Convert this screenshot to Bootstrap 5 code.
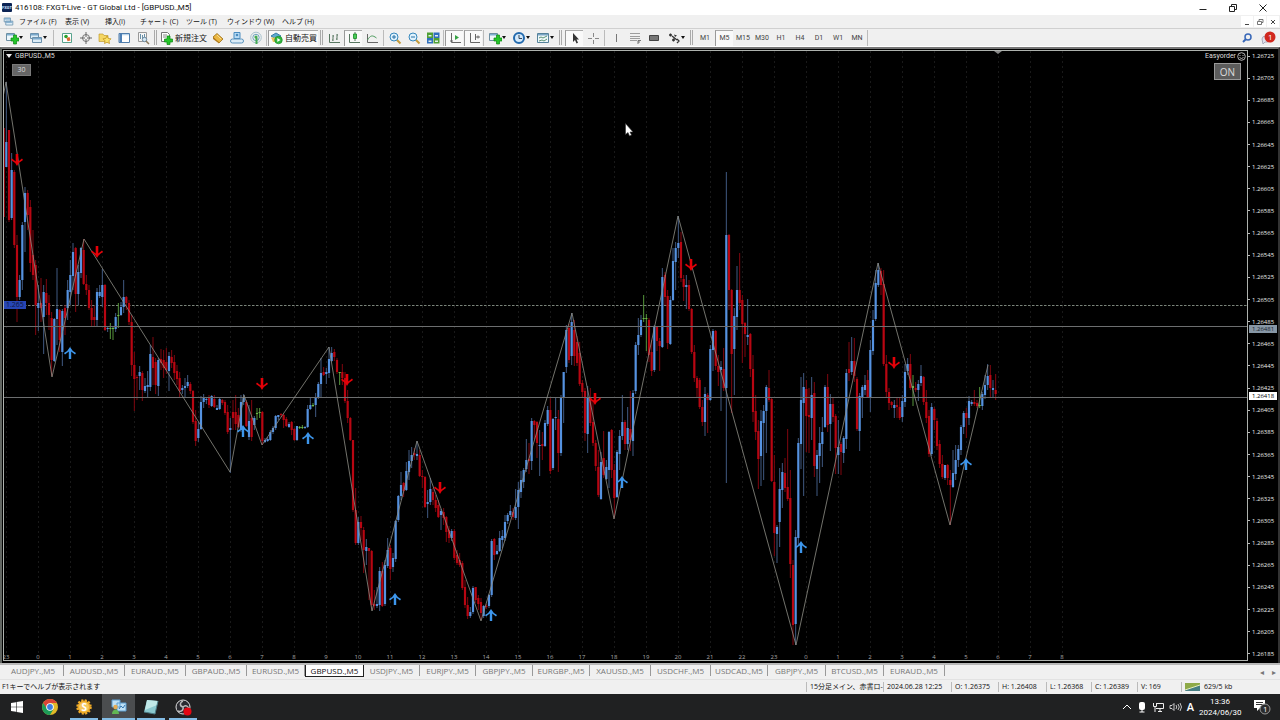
<!DOCTYPE html>
<html lang="ja">
<head>
<meta charset="utf-8">
<meta name="viewport" content="width=device-width, initial-scale=1">
<title>416108: FXGT-Live - GT Global Ltd - [GBPUSD.,M5]</title>
<link rel="stylesheet" href="https://cdn.jsdelivr.net/npm/bootstrap@5.3.0/dist/css/bootstrap.min.css">
<style>
body{font-family:"Open Sans","Noto Sans CJK JP",sans-serif;font-size:7px;line-height:10px;background:#f0f0f0;color:#111;overflow:hidden}
button{font:inherit;color:inherit;background:none;border:0;padding:0}
svg{display:block;flex:none}
.titlebar{height:15px;background:#fff;padding-left:2px;font-family:Roboto,"Noto Sans CJK JP",sans-serif;font-size:8px}
.logo-box{width:10px;height:9px;background:#0b2354;color:#cfe4ff;font-size:4px;line-height:9px;border-radius:1px;text-align:center;font-weight:700;margin-right:3px}
.win-ctl{gap:20px;padding-right:12px}
.menubar{height:14px;padding-left:3px;border-bottom:1px solid #d0d0d0}
.menu-grid{display:grid;grid-template-columns:16px 46px 40px 35px 46px 41px 55px auto;align-items:center}
.mdi{gap:1px;padding-right:1px}
.mdi button{width:12px;height:11px;background:#fff;display:grid;place-items:center}
.toolbar{height:18px;padding-left:2px;border-bottom:1px solid #fff}
.tg{display:flex;align-items:center;gap:1px;height:17px}
.tb{width:18px;height:16px;display:flex;align-items:center;justify-content:center;flex:none}
.tb.pressed{background:#f9f9f9;border-left:1px solid #999;border-top:1px solid #aaa}
.tb.drop{width:23px;justify-content:space-between;padding:0 2px 0 3px}
.tb.drop::after,.caret{content:"";border:2px solid transparent;border-top:3px solid #111;border-bottom:0}
.over .caret{border-width:4px 3px 0;border-top-color:#eee}
.tf .tb{font-family:Roboto,sans-serif;color:#444}
.vs{width:1px;height:16px;background:#bbb;flex:none;margin:0 2px}
.vs.tight{margin:0 1px}
.vs.wide{margin:0 4px}
.grip{width:3px;height:15px;border:1px solid #aaa;border-width:0 1px;flex:none;margin:0 2px}
.grip.wide{margin:0 3px}
.order{width:50px;gap:2px;justify-content:flex-start;white-space:nowrap;font-size:8px}
.frame{background:#000;border-top:2px solid #777;border-left:2px solid #626662;border-right:2px solid #333;padding:1px 0 2px 1px;min-height:0}
.plot{border:1px solid #aeb2ae}
.plot>svg{width:100%;height:100%;position:absolute;inset:0}
.over{position:absolute;color:#ddd;z-index:2}
.symbol-name{left:2px;top:0;gap:3px;font-family:Roboto,sans-serif}
.minutes{left:8px;top:13px;width:19px;height:12px;background:#666;border:1px solid #7a7a7a;line-height:10px}
.expert{right:1px;top:0;gap:1px;font-family:Roboto,sans-serif}
.toggle{right:6px;top:12px;width:27px;height:17px;background:#5c5c5c;border:1px solid #999;font-size:10px}
.level{left:0;top:41%;width:22px;height:8px;background:#2746b5;color:#10183f;line-height:8px;padding-left:2px}
.hours{left:-14px;right:0;bottom:-1px;display:flex;font-size:6px;line-height:8px;color:#aaa}
.hours span{flex:none;text-align:center}
.axis{width:30px;color:#eee;font-size:6px;line-height:8px;padding:2px 0 3px}
.axis div div{display:flex;align-items:center;gap:2px}
.axis div div::before{content:"";width:2px;height:1px;background:#bbb}
.tag{position:absolute;left:1px;right:1px;padding-left:3px;height:8px}
.tag.line{top:45%;background:#8797a6;color:#17202a}
.tag.bid{top:56%;background:#fff;color:#000}
.sheet-tabs{height:16px;border-top:2px solid #b8b8b8;color:#777;font-size:8px;padding-left:3px}
.tabs-grid{display:grid;grid-template-columns:61px 61px 61px 61px 58px 59px 56px 56px 57px 57px 61px 60px 57px 58px 58px 61px}
.tabs-grid button{height:11px;line-height:10px;border-right:1px solid #999;white-space:nowrap}
.tabs-grid .active{background:#fff;color:#111;border:1px solid #222;border-top:0;height:12px}
.statusbar{height:15px;padding-left:2px;white-space:nowrap;border-top:1px solid #e2e2e2}
.st-grid{display:grid;grid-template-columns:77px 68px 47px 48px 45px 46px 44px 99px}
.st-grid>div{border-left:1px solid #bbb;padding-left:3px}
.taskbar{height:26px;background:#202122;color:#fff;font-size:8px}
.task{width:33px;height:26px;display:grid;place-items:center}
.task.run{box-shadow:inset 0 -2px #83bce5;width:28px;margin-right:4px}
.task.cur{background:#4b4d4f;width:33px;margin-right:2px}
.tray{gap:5px;padding-right:8px}
.ime{font-size:11px;font-weight:600}
.clk{line-height:11px;width:42px;margin-right:6px;font-family:Roboto,sans-serif}
</style>
</head>
<body class="d-flex flex-column vh-100">
<svg width="0" height="0" class="position-absolute">
<defs>
<symbol id="newchart" viewBox="0 0 14 14"><path d="M1.500 2.500h8v7h-8z" fill="#edf6fb" stroke="#6d8fa3"/><path d="M2 3h7v1.500H2z" fill="#7eb0d0"/><path d="M8.500 4h3v3h2.500v3h-2.500v3h-3v-3H6V7h2.500z" fill="#24c52a" stroke="#0c8712" stroke-width=".7"/></symbol>
<symbol id="profiles" viewBox="0 0 14 14"><path d="M1.500 2.500h8v5h-8zM3.500 6.500h9v5h-9z" fill="#dcecf6" stroke="#6b91ad"/><path d="M2 3h7v1.500H2zM4 7h8v1.500H4z" fill="#79a8cc"/></symbol>
<symbol id="market" viewBox="0 0 14 14"><path d="M2.500 2.500h9v9h-9z" fill="#fff" stroke="#57a38d"/><circle cx="6" cy="5.500" r="1.800" fill="#2aa32a"/><path d="M6.500 7l3-1 1 3.500-3 .8z" fill="#e06a30"/></symbol>
<symbol id="target" viewBox="0 0 14 14"><circle cx="7" cy="7" r="3.500" fill="#eee" stroke="#777"/><path d="M7 1v5M7 8v5M1 7h5M8 7h5" stroke="#666"/></symbol>
<symbol id="stars" viewBox="0 0 14 14"><path d="M1 3h4l1 1.500h4v6H1z" fill="#f5d765" stroke="#b99020" stroke-width=".6"/><path d="M9 5l1.300 2.500 2.700.3-2 2 .5 2.700L9 11.300l-2.500 1.200.5-2.700-2-2 2.700-.3z" fill="#fbe36b" stroke="#bd8d12" stroke-width=".7"/></symbol>
<symbol id="panel" viewBox="0 0 14 14"><path d="M2 2.500h10.500v9H2z" fill="#fff" stroke="#4f7dac"/><path d="M2.500 3h2.500v8H2.500z" fill="#4c7eb4"/><path d="M5 3.200h7v1H5z" fill="#a6c9e6"/></symbol>
<symbol id="tester" viewBox="0 0 14 14"><path d="M2.500 1.500h8v9h-8z" fill="#f6f6f6" stroke="#999"/><path d="M4.500 3v5M6.500 4v4M8.500 3v4" stroke="#6890a8"/><circle cx="8.500" cy="8.500" r="2.200" fill="#d5e8f4" stroke="#6a88a0"/><path d="M10 10l3 3" stroke="#8a7a60" stroke-width="1.500"/></symbol>
<symbol id="neworder" viewBox="0 0 14 14"><path d="M2.500 1.500h6l2 2v7h-8z" fill="#fff" stroke="#777"/><path d="M4 4h4M4 6h3" stroke="#888"/><path d="M8 5h3v3h2.500v3H11v2.500H8V11H5.500V8H8z" fill="#24c52a" stroke="#0c8712" stroke-width=".7"/></symbol>
<symbol id="gold" viewBox="0 0 14 14"><path d="M2 6l4-3.500L12 8l-4 4z" fill="#eab641" stroke="#986b13" stroke-width=".8"/><path d="M2 6v2l6 4.500V11z" fill="#b37c1e"/><path d="M6 4l4 4" stroke="#f7dd8d"/></symbol>
<symbol id="vps" viewBox="0 0 14 14"><path d="M4 1.500h6v6H4z" fill="#b9dcf5" stroke="#4a8cc0"/><path d="M2.500 12a2 2 0 010-4h9a2 2 0 010 4z" fill="#dcecf7" stroke="#5a92bd"/><circle cx="7" cy="4" r="1.300" fill="#4a8cc0"/></symbol>
<symbol id="signal" viewBox="0 0 14 14"><g fill="none"><circle cx="7" cy="6.500" r="5.300" stroke="#a9c3ce"/><circle cx="7" cy="6.500" r="3.200" stroke="#6fa6be"/></g><circle cx="7" cy="6" r="1.600" fill="#45aa53"/><path d="M7.500 7v6" stroke="#45aa53" stroke-width="2"/></symbol>
<symbol id="auto" viewBox="0 0 14 14"><path d="M2 5l5-3 5 3-5 3z" fill="#5eaad0" stroke="#397ea5"/><path d="M2 6.500h8v4.500H4z" fill="#e7c45b"/><circle cx="9.500" cy="9" r="3.800" fill="#30b63d" stroke="#178421" stroke-width=".6"/><path d="M8.300 7v4l3.200-2z" fill="#fff"/></symbol>
<symbol id="bars" viewBox="0 0 14 14"><path d="M2.500 3v8.500H13M6 4v6M10 3v6M5 9h1M6 5h1M10 4h1M9 8h1" fill="none" stroke="#587761"/></symbol>
<symbol id="candles" viewBox="0 0 14 14"><path d="M2.500 3v8.500H13M8 1v9" fill="none" stroke="#587761"/><path d="M6.500 3h3v4.500h-3z" fill="#49c957" stroke="#168b25" stroke-width=".8"/></symbol>
<symbol id="linech" viewBox="0 0 14 14"><path d="M2.500 3v8.500H13" fill="none" stroke="#666"/><path d="M2.500 9c3-5 5-5 9-2" fill="none" stroke="#4c9b5c"/></symbol>
<symbol id="zin" viewBox="0 0 14 14"><path d="M8.500 8.500l4 4" stroke="#c49b3b" stroke-width="2"/><circle cx="6" cy="6" r="4" fill="#dff1fc" stroke="#3688bd"/><path d="M4 6h4M6 4v4" stroke="#2671a6"/></symbol>
<symbol id="zout" viewBox="0 0 14 14"><path d="M8.500 8.500l4 4" stroke="#c49b3b" stroke-width="2"/><circle cx="6" cy="6" r="4" fill="#dff1fc" stroke="#3688bd"/><path d="M4 6h4" stroke="#2671a6"/></symbol>
<symbol id="tile" viewBox="0 0 14 14"><path d="M1 1.500h6v5.500H1zM7.500 7h6v5.500h-6z" fill="#4fa035"/><path d="M7.500 1.500h6v5.500h-6zM1 7h6v5.500H1z" fill="#2f6fbd"/><path d="M2.500 4h3v1.500h-3zM9 4h3v1.500H9zM2.500 9.500h3v1.500h-3zM9 9.500h3v1.500H9z" fill="#e4f0ee"/></symbol>
<symbol id="scroll" viewBox="0 0 14 14"><path d="M3.500 2v9.500H13M2 10h3" fill="none" stroke="#666"/><path d="M7 4v5l4-2.500z" fill="#36a344"/></symbol>
<symbol id="shift" viewBox="0 0 14 14"><path d="M3.500 2v9.500H13M8.500 3v6" fill="none" stroke="#666"/><path d="M9 6h4M11 4.500v3" stroke="#666"/></symbol>
<symbol id="clock" viewBox="0 0 14 14"><circle cx="7" cy="7" r="5" fill="#d4e9fb" stroke="#2269ad" stroke-width="2"/><path d="M7 4v3.500h3" fill="none" stroke="#345"/></symbol>
<symbol id="tpl" viewBox="0 0 14 14"><path d="M1.500 2.500h11v9h-11z" fill="#eff8fa" stroke="#55829b"/><path d="M2 3h10v1.500H2z" fill="#7ba6c5"/><path d="M3 7l2-1 2 1 4-2M3 10l3-1 2 1 3-2" fill="none" stroke="#5a9275"/></symbol>
<symbol id="arrow" viewBox="0 0 14 14"><path d="M5 2v9l2-2 1.500 3.500 1.500-.7L8.500 8.500H11z" fill="#333"/></symbol>
<symbol id="cross" viewBox="0 0 14 14"><path d="M7.500 2v4M7.500 9v4M2 7.500h4M9 7.500h4" stroke="#888"/></symbol>
<symbol id="vline" viewBox="0 0 14 14"><path d="M7.500 3v8" stroke="#777"/></symbol>
<symbol id="fibo" viewBox="0 0 14 14"><path d="M2 2.500h10M2 5.500h10M2 7.500h10M2 9.500h7" stroke="#888" stroke-width=".8"/><path d="M10 13V9.500h3M10 11h2" fill="none" stroke="#555" stroke-width=".8"/></symbol>
<symbol id="rectg" viewBox="0 0 14 14"><path d="M2.500 4.500h9v5h-9z" fill="#777" stroke="#444"/></symbol>
<symbol id="objs" viewBox="0 0 14 14"><path d="M2 4h3M3.500 2.500v3M5 5l5 4M5 9h3M6.500 7.500v3M10 8l2 2-2 2" fill="none" stroke="#333" stroke-width="1.300"/><path d="M7 3.500l3 1-2 1.500z" fill="#333"/></symbol>
<symbol id="dn" viewBox="-7 -7 14 14"><path d="M-1.300-6h2.600V1.500L5-1.500 6 0Q2 2 0 6-2 2-6 0l1-1.500 3.700 3z" fill="#e60008"/></symbol>
<symbol id="up" viewBox="-7 -7 14 14"><path d="M-1.200 6h2.400V-1.500L5 1.500 6 0Q2-2 0-6-2-2-6 0l1 1.500 3.800-3z" fill="#3d96ec"/></symbol>
</defs>
</svg>

<header class="titlebar d-flex align-items-center">
  <span class="logo-box">FXGT</span><span>416108: FXGT-Live - GT Global Ltd - [GBPUSD.,M5]</span>
  <div class="win-ctl d-flex ms-auto">
    <button aria-label="最小化"><svg width="10" height="10"><path d="M1.500 6.500h7" stroke="#222"/></svg></button>
    <button aria-label="元に戻す"><svg width="10" height="10" fill="none" stroke="#222"><path d="M1.500 3.500h5v5h-5zM3.500 3V1.500h5v5H7"/></svg></button>
    <button aria-label="閉じる"><svg width="10" height="10" stroke="#222"><path d="M1.500 1.500l7 7M8.500 1.500l-7 7"/></svg></button>
  </div>
</header>

<nav class="menubar d-flex align-items-center">
  <div class="menu-grid">
    <svg width="11" height="11" viewBox="0 0 14 14"><use href="#profiles"/></svg>
    <button class="text-start">ファイル (F)</button><button class="text-start">表示 (V)</button><button class="text-start">挿入(I)</button><button class="text-start">チャート (C)</button><button class="text-start">ツール (T)</button><button class="text-start">ウィンドウ (W)</button><button class="text-start">ヘルプ (H)</button>
  </div>
  <div class="mdi d-flex ms-auto">
    <button aria-label="チャート最小化"><svg width="8" height="8"><path d="M2 6.500h4" stroke="#444"/></svg></button>
    <button aria-label="チャートを元に戻す"><svg width="8" height="8" fill="none" stroke="#555" stroke-width=".8"><path d="M1.500 3.500h4v3h-4zM3 3V1.500h4v3H6"/></svg></button>
    <button aria-label="チャートを閉じる"><svg width="8" height="8" stroke="#444"><path d="M2 2l4 4M6 2L2 6"/></svg></button>
  </div>
</nav>

<div class="toolbar d-flex align-items-center">
  <div class="tg" data-icons="newchart+ profiles+"></div><i class="vs wide"></i>
  <div class="tg" data-icons="market target stars panel tester"></div><i class="grip"></i>
  <div class="tg"><button class="tb order"><svg width="14" height="14"><use href="#neworder"/></svg>新規注文</button></div>
  <div class="tg" data-icons="gold vps signal"></div><i class="vs tight"></i>
  <div class="tg"><button class="tb order pressed"><svg width="14" height="14"><use href="#auto"/></svg>自動売買</button></div><i class="grip"></i>
  <div class="tg" data-icons="bars candles! linech"></div><i class="vs"></i>
  <div class="tg" data-icons="zin zout tile"></div><i class="vs tight"></i>
  <div class="tg" data-icons="scroll! shift!"></div><i class="vs tight"></i>
  <div class="tg" data-icons="newchart+ clock+ tpl+"></div><i class="grip wide"></i>
  <div class="tg" data-icons="arrow! cross"></div><i class="vs"></i>
  <div class="tg" data-icons="vline fibo rectg objs+"></div><i class="grip wide"></i>
  <div class="tg tf"><button class="tb">M1</button><button class="tb pressed">M5</button><button class="tb">M15</button><button class="tb">M30</button><button class="tb">H1</button><button class="tb">H4</button><button class="tb">D1</button><button class="tb">W1</button><button class="tb">MN</button></div><i class="vs tight"></i>
  <div class="d-flex ms-auto gap-2 pe-1">
    <button aria-label="検索"><svg width="12" height="12" fill="none"><circle cx="7" cy="5" r="3" stroke="#3968b8" stroke-width="1.500"/><path d="M5 7L2 10" stroke="#3968b8" stroke-width="2"/></svg></button>
    <button aria-label="通知"><svg width="15" height="14"><path d="M1 8a4 3 0 118 0 4 3 0 01-5 3l-2 2z" fill="#dfe2ee" stroke="#aab"/><circle cx="9" cy="6" r="5.500" fill="#d0281e"/><text x="7" y="9" fill="#fff" font-size="8">1</text></svg></button>
  </div>
</div>

<main class="frame d-flex flex-grow-1">
  <section class="plot position-relative flex-grow-1 overflow-hidden">
    <svg id="chart" viewBox="4 51 1243 609" preserveAspectRatio="none"></svg>
    <div class="over symbol-name d-flex align-items-center"><i class="caret"></i><span>GBPUSD.,M5</span></div>
    <button class="over minutes">30</button>
    <div class="over expert d-flex align-items-center">Easyorder<svg width="9" height="9" fill="none" stroke="#ddd" stroke-width=".8"><circle cx="4.500" cy="4.500" r="3.800"/><path d="M3 3v1M6 3v1M2.500 5.500q2 2 4 0"/></svg></div>
    <button class="over toggle">ON</button>
    <div class="over hours" id="hours"></div>
    <div class="over level">1.265</div>
  </section>
  <aside class="axis position-relative">
    <div class="d-flex flex-column justify-content-between h-100" id="prices"></div>
    <span class="tag line">1.26481</span><span class="tag bid">1.26418</span>
  </aside>
</main>

<div class="sheet-tabs d-flex">
  <div class="tabs-grid" id="tabs"></div>
  <div class="ms-auto pe-1 d-flex gap-2"><button aria-label="前へ">◂</button><button aria-label="次へ">▸</button></div>
</div>

<footer class="statusbar d-flex align-items-center">
  <span>F1キーでヘルプが表示されます</span>
  <div class="st-grid ms-auto">
    <div>15分足メイン、赤書ロ-</div><div>2024.06.28 12:25</div><div>O: 1.26375</div><div>H: 1.26408</div><div>L: 1.26368</div><div>C: 1.26389</div><div>V: 169</div>
    <div class="d-flex align-items-center gap-1"><svg width="15" height="8"><path d="M0 0h15v8H0z" fill="#477f84"/><path d="M0 0h15v2L0 7z" fill="#8eaa48"/><path d="M0 7l15-5" stroke="#e3ecc0"/></svg>629/5 kb</div>
  </div>
</footer>

<div class="taskbar d-flex align-items-center">
  <button class="task" aria-label="スタート"><svg width="12" height="12" fill="#fff"><path d="M0 2l5-.8v4.500H0zM5.600 1.100L12 0v5.700H5.600zM0 6.300h5v4.500L0 10zM5.600 6.300H12V12l-6.400-1.100z"/></svg></button>
  <button class="task me-1" aria-label="Chrome"><svg width="16" height="16" viewBox="-8 -8 16 16"><circle r="8" fill="#e1b927"/><path d="M-6.900-4A8 8 0 016.900-4H0L-3.500 2z" fill="#da4437"/><path d="M-6.900-4A8 8 0 000 8l3.500-6L0 3-3.500 1z" fill="#1c9c58"/><circle r="3.800" fill="#fff"/><circle r="2.900" fill="#3c7fe0"/></svg></button>
  <button class="task run" aria-label="XM"><svg width="16" height="16" viewBox="-8 -8 16 16"><circle r="6.500" fill="#eda722" stroke="#f0ab28" stroke-width="2.500" stroke-dasharray="2 1.400"/><circle r="5" fill="#f6c75d"/><text x="-2.500" y="3.500" fill="#fff" font-size="10" font-weight="700">S</text></svg></button>
  <button class="task run cur" aria-label="MetaTrader"><svg width="16" height="16"><path d="M1 1h8v7H1zM6 4h9v8H6z" fill="#bfe1f5" stroke="#5c9ed0"/><path d="M8 10l2-3 2 2 2-3" fill="none" stroke="#3577b0"/><circle cx="4.500" cy="8" r="2.200" fill="#e4ac55"/><path d="M1 15c0-6 7-6 7 0z" fill="#62b653"/></svg></button>
  <button class="task run" aria-label="メモ帳"><svg width="16" height="16"><path d="M4 1l11 1-3 13L1 13z" fill="#8bc9cf"/><path d="M4 1l11 1-1 4L2 11z" fill="#c0e9e8"/><path d="M1 13l11 2 3-13" fill="none" stroke="#4c7c86"/></svg></button>
  <button class="task run" aria-label="OBS"><svg width="17" height="17"><circle cx="8" cy="8" r="7" fill="#292a30" stroke="#ddd"/><path d="M8 8C4 7 5 3 8 2M8 8c3-3 6 0 6 3M8 8c1 4-3 5-5 4" fill="none" stroke="#bbb" stroke-width="1.500"/><circle cx="12.500" cy="12.500" r="4" fill="#e30612"/></svg></button>
  <div class="tray d-flex align-items-center ms-auto">
    <svg width="10" height="10" fill="none" stroke="#fff"><path d="M1 7l4-4 4 4"/></svg>
    <svg width="10" height="12"><rect x="2" y="1" width="6" height="8" rx="2" fill="#fff"/><path d="M5 9v2M2.500 11h5" stroke="#fff"/></svg>
    <svg width="12" height="12" fill="none" stroke="#eee"><path d="M4 2.500h7.500v5H4M6 10.500h4M8 8v2M1.500 2v3.500h3V2M3 6v5"/></svg>
    <svg width="13" height="12" fill="none" stroke="#eee"><path d="M1 4.500h2l2-2v7l-2-2H1zM7 4q1.500 2 0 4M9 3q2.500 3 0 6M11 2q3 4 0 8" stroke-width=".8"/></svg>
    <span class="ime">A</span>
    <div class="clk text-center">13:36<br>2024/06/30</div>
    <button aria-label="アクションセンター"><svg width="20" height="18"><path d="M2 2h11v8H8l-3 3v-3H2z" fill="#fff"/><path d="M4 4.500h7M4 6.500h7" stroke="#333"/><circle cx="13" cy="11" r="5" fill="#2b2c2d" stroke="#999"/><text x="11" y="14" fill="#fff" font-size="8">1</text></svg></button>
  </div>
</div>

<script src="https://cdn.jsdelivr.net/npm/bootstrap@5.3.0/dist/js/bootstrap.bundle.min.js"></script>
<script>
// Toolbar icons: "+" marks a drop-down, "!" a pressed button
document.querySelectorAll('[data-icons]').forEach(g=>{
  g.innerHTML=g.dataset.icons.split(' ').map(s=>{
    const n=s.replace(/[+!]/,'');
    return `<button class="tb${s.endsWith('+')?' drop':''}${s.endsWith('!')?' pressed':''}" aria-label="${n}"><svg width="14" height="14"><use href="#${n}"/></svg></button>`;
  }).join('');
});
document.getElementById('tabs').innerHTML='AUDJPY AUDUSD EURAUD GBPAUD EURUSD GBPUSD USDJPY EURJPY GBPJPY EURGBP XAUUSD USDCHF USDCAD GBPJPY BTCUSD EURAUD'.split(' ').map(t=>`<button class="${t==='GBPUSD'?'active':''}">${t}.,M5</button>`).join('');
let p='';for(let v=126725;v>=126185;v-=20)p+=`<div>${(v/1e5).toFixed(5)}</div>`;
document.getElementById('prices').innerHTML=p;
let h='';for(let i=0;i<34;i++)h+=`<span style="width:${3200/1257}%">${(i+23)%24}</span>`;
document.getElementById('hours').innerHTML=h;

// Five-minute bars: colour, high, body top, body bottom, low
const bars=`r128 128 217 217,b82 142 167 167,r130 130 220 222,b153 170 218 220,r170 172 245 248,r235 245 297 322,b275 280 297 300,b222 225 280 290,b187 193 222 252,r190 193 215 230,r200 207 263 272,r230 255 275 280,r260 265 305 335,
b285 303 308 331,r278 303 308 322,b285 292 317 354,r279 293 303 315,r295 303 315 330,r312 318 360 376,b318 319 361 362,b268 309 319 345,r309 310 340 352,b309 311 352 366,r305 308 318 335,b280 290 308 320,
b260 275 292 305,b243 252 276 290,r247 248 294 312,b265 272 294 305,b247 248 273 278,r239 250 284 285,r275 284 290 295,r285 290 308 310,r300 308 320 326,r306 317 320 326,b288 292 320 327,b285 292 296 298,
b269 285 297 307,r284 285 330 331,b326 328 329 332,g323 328 329 339,g327 328 329 340,b313 317 329 332,g303 315 316 328,b302 307 315 316,b280 297 307 313,r296 297 303 310,r300 303 322 325,r315 322 365 376,
r352 365 379 411,r375 377 378 400,b366 372 376 390,r371 373 390 401,b378 386 391 393,b371 385 387 397,b345 354 387 391,r337 357 368 385,r358 362 385 394,b358 360 386 396,r349 359 363 370,r350 360 368 378,
r348 362 370 374,b352 356 371 391,r350 357 363 368,r355 362 373 380,r365 371 379 385,r372 378 391 397,b385 388 390 394,b378 386 388 397,b375 382 386 388,r382 384 391 394,r390 391 422 424,r410 421 441 446,
b422 429 438 442,b396 402 429 430,b394 397 402 408,b398 399 400 404,r395 398 405 408,b395 396 406 407,r395 399 407 408,b405 408 410 410,b398 399 409 410,r399 400 403 405,r400 402 413 415,r405 412 432 434,
b418 428 430 473,r400 412 418 430,r395 412 424 430,r408 415 427 428,b395 402 430 432,b394 398 402 405,r400 402 426 427,b405 421 437 440,r400 418 437 441,b416 418 425 430,g408 413 414 420,g408 412 413 418,
r411 412 441 445,b438 440 442 443,b437 439 441 442,b430 432 440 441,b426 428 432 434,b415 416 428 430,b415 415 417 420,r413 414 415 417,r414 415 420 428,r417 419 426 427,b422 424 427 428,r421 422 430 435,
r428 429 440 441,b426 426 440 441,g426 427 428 429,g425 427 428 429,b426 427 428 429,b405 409 427 428,b398 405 409 410,g403 405 406 407,b393 397 405 417,b382 384 397 399,b358 373 384 397,r367 372 375 376,
b368 372 374 384,b347 359 373 378,b347 353 361 362,r349 352 357 361,r358 360 372 374,g372 372 373 385,r364 372 378 385,r372 378 401 403,r390 401 418 423,r417 418 440 441,r440 440 510 512,r488 510 543 545,
b517 522 543 545,r516 522 528 540,r527 530 550 573,b539 547 551 565,r548 548 551 600,r550 551 605 610,r590 604 606 610,b587 604 606 608,b567 571 605 611,r562 571 606 607,b560 565 604 606,b538 550 566 568,
r545 548 569 580,b553 558 567 572,b520 521 559 562,b495 496 520 522,b472 485 496 500,r482 483 491 497,b462 471 490 491,b450 461 472 480,b447 455 461 468,r448 453 455 460,b441 454 456 460,r450 455 476 477,
r470 476 477 488,r476 477 507 508,b490 502 504 518,b478 489 502 505,r488 492 500 505,r495 500 508 512,r500 505 517 518,b509 511 515 530,r508 512 518 525,r516 517 532 542,r526 530 538 543,b529 531 538 541,
r529 531 558 560,r550 555 563 565,r553 560 565 567,r561 563 588 590,r580 587 605 608,r597 605 616 619,b607 612 616 618,b586 588 612 614,r587 587 600 603,r595 598 604 610,r598 602 613 620,b605 606 616 618,
r604 606 607 609,b594 595 606 608,b539 541 595 597,r538 539 555 560,b545 551 554 555,b531 538 551 552,b530 536 540 548,b515 522 538 541,b513 515 521 524,b505 511 515 517,r508 512 517 520,b489 507 518 520,
b482 490 507 529,b471 480 492 498,b468 470 482 488,b439 460 469 472,r443 459 461 474,b418 421 461 470,r420 421 425 439,r421 422 443 458,b430 445 446 476,r432 444 446 460,b420 423 446 447,b406 410 424 426,
r398 410 471 474,b418 419 468 470,b397 417 418 430,r410 419 453 472,b395 398 453 456,b372 372 398 423,b325 330 367 373,r324 328 360 363,b313 322 356 365,r320 330 356 366,r336 342 363 366,r342 353 384 386,
r380 383 392 397,r388 391 433 441,b386 397 434 453,r388 397 423 426,r400 422 443 446,r440 443 466 471,r450 467 495 497,b452 462 499 500,r431 458 475 478,b460 467 479 480,b431 432 470 488,r429 430 470 478,
r464 470 498 518,b450 452 497 498,b430 436 454 470,b395 422 436 440,r420 422 444 450,b407 428 444 450,r391 429 440 451,b390 393 441 456,b342 345 391 394,b318 335 345 355,b315 320 335 337,g295 318 319 322,
g314 318 319 351,r318 320 355 362,r340 352 371 376,b325 327 370 372,r327 327 341 351,r338 341 346 371,b268 277 347 348,r272 275 297 305,r290 296 343 349,b296 300 344 345,b248 261 300 301,b242 248 262 290,
b216 243 248 258,r232 242 278 282,r275 279 287 301,b275 285 287 309,r280 285 309 311,r308 309 352 354,r345 352 378 382,r376 378 388 398,r378 380 407 409,r400 407 422 426,b387 394 422 436,r393 395 400 433,
b345 349 400 401,b329 331 350 371,r330 331 366 370,r355 366 372 386,b361 367 370 411,r348 369 388 391,b172 235 388 483,r234 235 290 310,r289 290 354 413,b308 316 349 395,b266 290 317 330,r253 290 303 310,
r295 300 324 363,r322 323 334 357,b299 335 337 345,r333 334 369 377,r355 369 412 422,r395 411 432 440,r420 431 459 489,b410 421 456 486,b405 411 423 480,b385 387 411 453,r370 388 400 402,r398 399 481 482,
r455 482 533 556,b525 527 534 563,b468 489 522 547,b463 472 490 508,r458 473 488 492,r429 487 499 501,r470 498 564 578,r560 565 625 645,b530 537 624 645,b438 443 538 545,b377 400 444 469,b373 387 403 496,
r380 389 416 452,r388 415 417 453,b377 395 418 440,r382 393 466 477,b450 455 469 496,b427 443 456 483,b417 432 444 467,b385 387 427 428,r374 387 425 432,b394 404 424 451,r398 404 417 422,r414 416 448 474,
b420 447 455 474,r442 444 452 475,b436 438 453 463,b369 373 439 449,r342 369 373 381,b337 361 372 375,r338 361 376 382,r377 379 429 431,b393 396 431 451,b385 387 397 418,b375 385 390 395,r370 380 397 398,
b340 350 397 412,b310 320 351 355,b270 283 319 321,b263 270 285 287,r268 271 285 295,r270 284 364 366,r355 364 392 397,r388 392 403 410,r401 402 405 408,b400 405 408 418,r397 405 407 418,r397 407 418 420,
b395 401 417 422,b364 372 402 407,b358 364 371 375,r354 364 388 390,g375 386 388 406,r382 388 390 392,b380 384 390 401,b365 376 383 386,r376 377 402 405,r390 402 418 423,r410 416 454 457,b403 407 454 456,
r407 409 420 430,r418 421 446 450,r440 444 464 468,r455 464 477 479,b465 465 478 480,r464 465 478 485,r470 480 485 525,b450 473 487 488,b445 460 474 480,b445 449 460 467,b425 427 450 455,b411 413 427 434,
r408 413 418 438,b396 401 418 425,b400 402 404 406,r390 402 404 406,r400 403 406 408,g387 405 406 408,b392 394 406 410,b375 385 395 399,b364 376 385 390,r365 375 388 398,b380 388 390 397,r374 390 394 400`.split(',').map(s=>s.trim());
const body={r:'#b80612',b:'#5592e0',g:'#6cb846'},wick={r:'#80060f',b:'#405a82',g:'#56963c'};
let s='';
for(let x=6;x<1070;x+=32)s+=`<path d="M${x+.5} 51V653" stroke="#191919" stroke-dasharray="2 3"/>`;
s+='<path d="M4 305.500H1247" stroke="#7a847a" stroke-dasharray="2.500 1.500"/>';
bars.forEach((t,i)=>{
  const c=t[0],[hi,a,b,lo]=t.slice(1).split(' ').map(Number),x=6.33+(i-1)*8/3;
  s+=`<path d="M${x.toFixed(2)} ${hi}V${lo}" stroke="${wick[c]}"/><path d="M${x.toFixed(2)} ${a}V${Math.max(b,a+1)}" stroke="${body[c]}" stroke-width="2.200"/>`;
});
s+='<path d="M4 326.500H1247M4 397.500H1247" stroke="#6c6e6f"/>';
s+='<polyline points="3,97 6,82 52,377 84,239 230,472 244,395 262,445 329,347 372,611 417,441 481,621 572,313 614,519 678,216 796,645 878,263 950,525 988,365" fill="none" stroke="#8f8f86" stroke-width=".8"/>';
const mark=(id,pts)=>pts.forEach(([x,y])=>s+=`<use href="#${id}" x="${x-7}" y="${y-7}" width="14" height="14"/>`);
mark('dn',[[17,160],[97,252],[262,384],[347,380],[440,488],[595,399],[691,265],[894,363]]);
mark('up',[[70,353],[243,431],[308,438],[395,599],[491,615],[622,482],[801,547],[966,464]]);
s+='<path d="M994 51h8l-4 3z" fill="#888"/><path d="M625.500 123.500v11l2.500-2 1.500 3.500 2-1-1.500-3h3z" fill="#fff" stroke="#333" stroke-width=".6"/>';
document.getElementById('chart').innerHTML=s;
</script>
</body>
</html>
